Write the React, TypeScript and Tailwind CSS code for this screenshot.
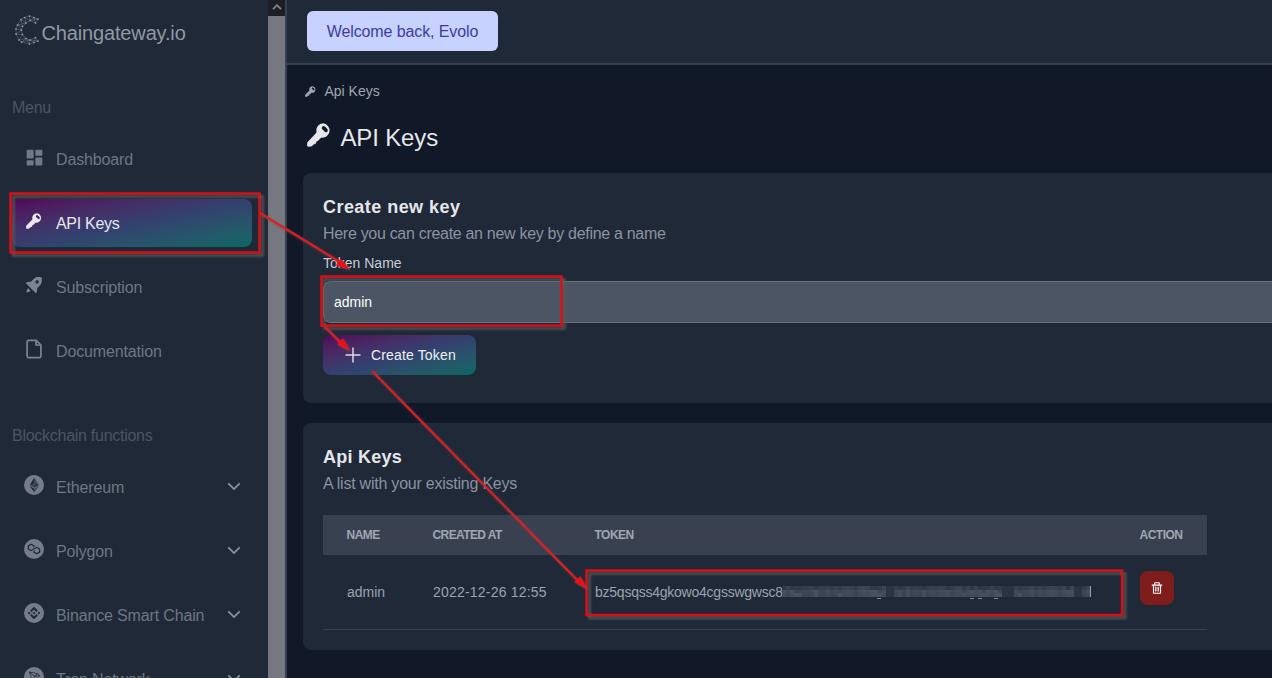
import React from "react";
import { BiSolidDashboard, BiSolidRocket, BiTrash } from "react-icons/bi";

const ETH = [
  "M16.498 4v8.87l7.497 3.35z",
  "M16.498 4L9 16.22l7.498-3.35z",
  "M16.498 21.968v6.027L24 17.616z",
  "M16.498 27.995v-6.028L9 17.616z",
  "M16.498 20.573l7.497-4.353-7.497-3.348z",
  "M9 16.22l7.498 4.353v-7.701z",
];
const ETH_OPACITY = [0.6, 1, 0.6, 1, 0.85, 0.7];
const MATIC = [
  "M21.092 12.693c-.369-.215-.848-.215-1.254 0l-2.879 1.654-1.955 1.078-2.879 1.653c-.369.216-.848.216-1.254 0l-2.288-1.294c-.369-.215-.627-.61-.627-1.042V12.19c0-.431.221-.826.627-1.042l2.25-1.258c.37-.216.85-.216 1.256 0l2.25 1.258c.37.216.628.611.628 1.042v1.654l1.955-1.115v-1.653a1.16 1.16 0 00-.627-1.042l-4.17-2.372c-.369-.216-.848-.216-1.254 0l-4.244 2.372A1.16 1.16 0 006 11.076v4.78c0 .432.221.827.627 1.043l4.244 2.372c.369.215.849.215 1.254 0l2.879-1.618 1.955-1.114 2.879-1.617c.369-.216.848-.216 1.254 0l2.251 1.258c.37.215.627.61.627 1.042v2.552c0 .431-.22.826-.627 1.042l-2.25 1.294c-.37.216-.85.216-1.255 0l-2.251-1.258c-.37-.216-.628-.611-.628-1.042v-1.654l-1.955 1.115v1.653c0 .431.221.827.627 1.042l4.244 2.372c.369.216.848.216 1.254 0l4.244-2.372c.369-.215.627-.61.627-1.042v-4.78a1.16 1.16 0 00-.627-1.042l-4.28-2.409z",
];
const BNB = [
  "M12.116 14.404L16 10.52l3.886 3.886 2.26-2.26L16 6l-6.144 6.144 2.26 2.26zM6 16l2.26-2.26L10.52 16l-2.26 2.26L6 16zm6.116 1.596L16 21.48l3.886-3.886 2.26 2.259L16 26l-6.144-6.144-.003-.003 2.263-2.257zM21.48 16l2.26-2.26L26 16l-2.26 2.26L21.48 16zm-3.188-.002h.002V16L16 18.294l-2.291-2.29-.004-.004.004-.003.401-.402.195-.195L16 13.706l2.293 2.293z",
];
const TRX = [
  "M21.932 9.913L7.5 7.257l7.595 19.112 10.583-12.894-3.746-3.562zm-.232 1.17l2.208 2.099-6.038 1.093 3.83-3.192zm-5.142 2.973l-6.364-5.278 10.402 1.914-4.038 3.364zm-.453.934l-1.038 8.58L9.472 9.487l6.633 5.502zm.96.455l6.687-1.21-7.67 9.343.983-8.133z",
];

function Coin({ paths, opacity }: { paths: string[]; opacity?: number[] }) {
  return (
    <svg viewBox="0 0 32 32" className="-mt-1 size-5 shrink-0">
      <circle cx="16" cy="16" r="16" fill="#767c8a" />
      {paths.map((d, i) => (
        <path key={i} d={d} fill="#1f2937" opacity={opacity ? opacity[i] : 1} />
      ))}
    </svg>
  );
}

function KeyIcon({ className }: { className: string }) {
  return (
    <svg viewBox="0 0 24 24" className={className} fill="currentColor" fillRule="evenodd">
      <path d="M16.4 0.3a7.2 7.2 0 0 0-6.9 9.3L0.7 18.9a1.8 1.8 0 0 0-.5 1.3L.1 22.6a1.1 1.1 0 0 0 1.1 1.1l2.8-.2a1.8 1.8 0 0 0 1.1-.5l1.5-1.6 1.5-.3 1-1 .3-1.7 1.5-.3 3.4-3.5A7.2 7.2 0 1 0 16.4.3zM15.1 3.9a1.8 1.8 0 0 1 2.2-.6 7 7 0 0 1 3.4 3.4 1.9 1.9 0 0 1-.7 2.2 1.8 1.8 0 0 1-2.2-.2l-2.5-2.5a1.8 1.8 0 0 1-.2-2.3z" />
    </svg>
  );
}

function FileIcon() {
  return (
    <svg viewBox="0 0 16 20" className="-mt-1 mr-0.5 ml-0.5 h-5 w-4 text-[#7d8391]" fill="none" stroke="currentColor" strokeWidth="1.7" strokeLinejoin="round">
      <path d="M10.2 1.3H2.6A1.5 1.5 0 0 0 1.1 2.8v14.3a1.5 1.5 0 0 0 1.5 1.5h10.8a1.5 1.5 0 0 0 1.5-1.5V6z" />
      <path d="M10 1.6V6h4.6" />
    </svg>
  );
}

function Chevron() {
  return (
    <svg viewBox="0 0 14 9" className="-mt-0.5 mr-[-1px] h-[9px] w-[14px]">
      <path d="M1.3 1.4L7 7.1l5.7-5.7" fill="none" stroke="#8b919d" strokeWidth="1.8" />
    </svg>
  );
}

const LOGO_POINTS: [number, number][] = [
  [23, 4], [19, 2.5], [14.5, 1], [9.5, 2.5], [6, 4.5], [2.5, 10], [1, 14], [1, 19], [4, 25], [6.5, 27], [14.5, 29], [19, 27.5], [23, 26],
  [20.5, 8], [15, 5.5], [11, 8], [7.5, 11.5], [6.5, 15], [7.5, 19.5], [11, 23.5], [15, 25], [20.5, 22.5],
];
const LOGO_LINES: [number, number][] = [
  [0, 1], [1, 2], [2, 3], [3, 4], [4, 5], [5, 6], [6, 7], [7, 8], [8, 9], [9, 10], [10, 11], [11, 12],
  [13, 14], [14, 15], [15, 16], [16, 17], [17, 18], [18, 19], [19, 20], [20, 21],
  [0, 13], [1, 14], [2, 14], [3, 14], [3, 15], [4, 15], [4, 16], [5, 16], [5, 17], [6, 17], [7, 17], [7, 18],
  [8, 18], [8, 19], [9, 19], [10, 19], [10, 20], [11, 20], [12, 21], [11, 21], [1, 13], [0, 14], [12, 20], [5, 15], [9, 20],
];

function Logo() {
  return (
    <svg viewBox="0 0 25 30" className="h-[30px] w-[25px]">
      {LOGO_LINES.map(([a, b], i) => (
        <line
          key={i}
          x1={LOGO_POINTS[a][0]}
          y1={LOGO_POINTS[a][1]}
          x2={LOGO_POINTS[b][0]}
          y2={LOGO_POINTS[b][1]}
          stroke="#7c8390"
          strokeWidth="0.45"
        />
      ))}
      {LOGO_POINTS.map(([x, y], i) => (
        <circle key={i} cx={x} cy={y} r="0.85" fill="#9ba1ab" />
      ))}
    </svg>
  );
}

function NavItem({
  icon,
  label,
  active,
  expandable,
}: {
  icon: React.ReactNode;
  label: string;
  active?: boolean;
  expandable?: boolean;
}) {
  return (
    <li
      className={
        active
          ? "flex h-12 items-center rounded-lg bg-linear-to-br from-[#52025a] via-[#33406f] to-[#036964] px-3 tracking-[-0.3px] text-[#e9e7ef]"
          : "flex h-12 items-center px-3 tracking-[-0.15px] text-[#6f7684]"
      }
    >
      {icon}
      <span className="mt-0.5 ml-3 grow text-base leading-6">{label}</span>
      {expandable && <Chevron />}
    </li>
  );
}

function SideLabel({ children }: { children: string }) {
  return <h3 className="h-6 text-base leading-[26px] tracking-[-0.27px] text-[#4b5563]">{children}</h3>;
}

function Sidebar() {
  return (
    <aside className="h-full w-[268px] shrink-0 overflow-hidden bg-[#202937] pr-4 pl-3">
      <div className="flex h-[95px] items-start pt-[15px] pl-[3px]">
        <Logo />
        <span className="mt-[4px] ml-[1.5px] text-[20px] leading-7 tracking-[-0.15px] text-[#9298a4]">Chaingateway.io</span>
      </div>
      <SideLabel>Menu</SideLabel>
      <ul className="mt-4 flex flex-col gap-4">
        <NavItem icon={<BiSolidDashboard className="-mx-[0.5px] -mt-1 size-[21px] text-[#717887]" />} label="Dashboard" />
        <NavItem icon={<KeyIcon className="mx-0.5 -mt-1 size-4" />} label="API Keys" active />
        <NavItem icon={<BiSolidRocket className="-mt-1 size-5 text-[#7d8391]" />} label="Subscription" />
        <NavItem icon={<FileIcon />} label="Documentation" />
      </ul>
      <div className="h-12" />
      <SideLabel>Blockchain functions</SideLabel>
      <ul className="mt-4 flex flex-col gap-4">
        <NavItem icon={<Coin paths={ETH} opacity={ETH_OPACITY} />} label="Ethereum" expandable />
        <NavItem icon={<Coin paths={MATIC} />} label="Polygon" expandable />
        <NavItem icon={<Coin paths={BNB} />} label="Binance Smart Chain" expandable />
        <NavItem icon={<Coin paths={TRX} />} label="Tron Network" expandable />
      </ul>
    </aside>
  );
}

function Scrollbar() {
  return (
    <div className="flex h-full w-[17px] shrink-0 flex-col bg-[#75797f]">
      <div className="flex h-4 items-center justify-center bg-[#1d1f27]">
        <svg viewBox="0 0 10 6" className="-mt-0.5 h-[6px] w-[10px]">
          <path d="M1 5.2L5 1.2l4 4" fill="none" stroke="#858689" strokeWidth="1.7" />
        </svg>
      </div>
    </div>
  );
}

const GAPS = [26, 27, 55, 56, 57, 73, 74];

function Redacted() {
  const cells: React.ReactNode[] = [];
  for (let c = 0; c < 77; c++) {
    for (let r = 0; r < 3; r++) {
      const n = ((c * 37 + r * 53 + ((c * c) % 17) * 11) % 29) / 29;
      const base = r === 0 ? 0.13 : 0.24;
      cells.push(
        <rect
          key={`${c}-${r}`}
          x={c * 4}
          y={r * 3.5}
          width="4"
          height="3.5"
          fill="#9299a7"
          opacity={GAPS.includes(c) ? 0.1 : base + n * 0.13}
        />
      );
    }
  }
  return (
    <svg viewBox="0 0 310 13" className="h-[13px] w-[310px] shrink-0" shapeRendering="crispEdges">
      {cells}
      {[95, 188, 196, 212].map((x) => (
        <rect key={x} x={x} y="12" width="4" height="1" fill="#7b8290" />
      ))}
      <rect x="308" y="0" width="1" height="11" fill="#9ba1ac" />
    </svg>
  );
}

function Annotations() {
  const boxes = [
    [10.5, 193.5, 249, 59],
    [321.5, 276.5, 240, 49],
    [586.5, 570.5, 535.5, 44.5],
  ];
  const arrows = [
    { from: [260, 213], to: [350, 269.5] },
    { from: [325, 327], to: [350, 351] },
    { from: [372, 371], to: [587, 589] },
  ];
  return (
    <svg viewBox="0 0 1272 678" className="pointer-events-none absolute inset-0 h-[678px] w-[1272px]">
      <defs>
        <filter id="shade" x="-10%" y="-20%" width="120%" height="150%">
          <feDropShadow dx="3" dy="3" stdDeviation="1.2" floodColor="#5a5856" floodOpacity="0.9" />
        </filter>
        <filter id="soft" x="-20%" y="-20%" width="140%" height="140%">
          <feDropShadow dx="1.5" dy="1.5" stdDeviation="0.8" floodColor="#6b4a4c" floodOpacity="0.7" />
        </filter>
      </defs>
      {boxes.map(([x, y, w, h]) => (
        <rect key={x} x={x} y={y} width={w} height={h} fill="none" stroke="#d81118" strokeWidth="2.5" filter="url(#shade)" />
      ))}
      {arrows.map(({ from, to }, i) => {
        const angle = (Math.atan2(to[1] - from[1], to[0] - from[0]) * 180) / Math.PI;
        return (
          <g key={i} filter="url(#soft)">
            <line x1={from[0]} y1={from[1]} x2={to[0] - 6} y2={to[1] - 5} stroke="#e01a22" strokeWidth="2.1" />
            <path
              d="M0 0L-14 -4.2V4.2Z"
              fill="#f01118"
              transform={`translate(${to[0]} ${to[1]}) rotate(${angle})`}
            />
          </g>
        );
      })}
    </svg>
  );
}

export default function App() {
  return (
    <div className="relative flex h-[678px] w-[1272px] overflow-hidden bg-[#111827] font-['Liberation_Sans',Arial,sans-serif]">
      <Sidebar />
      <Scrollbar />
      <div className="flex min-w-0 grow flex-col border-l-2 border-[#374151]">
        <header className="flex h-[65px] shrink-0 items-start border-b-2 border-[#374151] bg-[#202937] pt-[11px] pl-5">
          <div className="flex h-10 w-[191px] items-center justify-center rounded-md bg-[#c7d2fe] pt-0.5 text-base tracking-[-0.1px] text-[#3f3aa0]">
            Welcome back, Evolo
          </div>
        </header>
        <main className="flex flex-col pl-4">
          <div className="mt-4 flex h-5 items-center text-sm text-[#a0a6b1]">
            <KeyIcon className="ml-[1.5px] size-[11px]" />
            <span className="ml-[9px]">Api Keys</span>
          </div>
          <h1 className="mt-5 flex h-8 items-center text-2xl text-[#e5e7eb]">
            <KeyIcon className="-mt-1 ml-1 size-6" />
            <span className="mt-0.5 ml-[9.5px] tracking-[-0.15px]">API Keys</span>
          </h1>
          <section className="mt-5 h-[230px] rounded-l-lg bg-[#202937] pt-5 pl-5">
            <h2 className="text-lg leading-7 font-bold tracking-[0.45px] text-[#e5e7eb]">Create new key</h2>
            <p className="h-6 text-base leading-[26px] tracking-[-0.3px] text-[#8b92a0]">
              Here you can create an new key by define a name
            </p>
            <p className="mt-2 text-sm leading-5 text-[#c9cdd4]">Token Name</p>
            <div className="mt-2 flex h-[42px] items-center rounded-l-lg border border-r-0 border-[#6b7280] bg-[#4b5563] pl-[10px] text-sm text-white">
              admin
            </div>
            <button className="mt-3 flex h-10 w-[153px] items-center rounded-lg bg-linear-to-br from-[#52025a] via-[#33406f] to-[#036964] pl-[22px] text-sm text-[#f0f0f4]">
              <svg viewBox="0 0 16 16" className="size-4">
                <path d="M8 .5v15M.5 8h15" stroke="#ded9e6" strokeWidth="1.5" />
              </svg>
              <span className="ml-[10px] tracking-[0.15px]">Create Token</span>
            </button>
          </section>
          <section className="mt-5 h-[227px] rounded-l-lg bg-[#202937] pt-5 pl-5">
            <h2 className="text-lg leading-7 font-bold tracking-[0.25px] text-[#e5e7eb]">Api Keys</h2>
            <p className="h-6 text-base leading-[26px] tracking-[-0.23px] text-[#8b92a0]">A list with your existing Keys</p>
            <div className="mt-5 w-[884px]">
              <div className="grid h-10 grid-cols-[86px_162px_545px_auto] items-center bg-[#394150] pl-[23.5px] text-xs font-bold tracking-[-0.5px] text-[#a0a6b1]">
                <span>NAME</span>
                <span className="tracking-[-0.6px]">CREATED AT</span>
                <span>TOKEN</span>
                <span>ACTION</span>
              </div>
              <div className="grid h-[75px] grid-cols-[86px_162px_545px_auto] items-center border-b border-[#394150] pl-6 text-sm text-[#9ca3af]">
                <span>admin</span>
                <span className="tracking-[0.2px]">2022-12-26 12:55</span>
                <span className="flex items-center">
                  <span className="w-[187px] overflow-hidden tracking-[-0.24px]">bz5qsqss4gkowo4cgsswgwsc8</span>
                  <Redacted />
                </span>
                <button className="-mt-2 flex size-[34px] items-center justify-center rounded-lg bg-[#7f1d1d] text-white">
                  <BiTrash className="size-[14px]" />
                </button>
              </div>
            </div>
          </section>
        </main>
      </div>
      <Annotations />
    </div>
  );
}
